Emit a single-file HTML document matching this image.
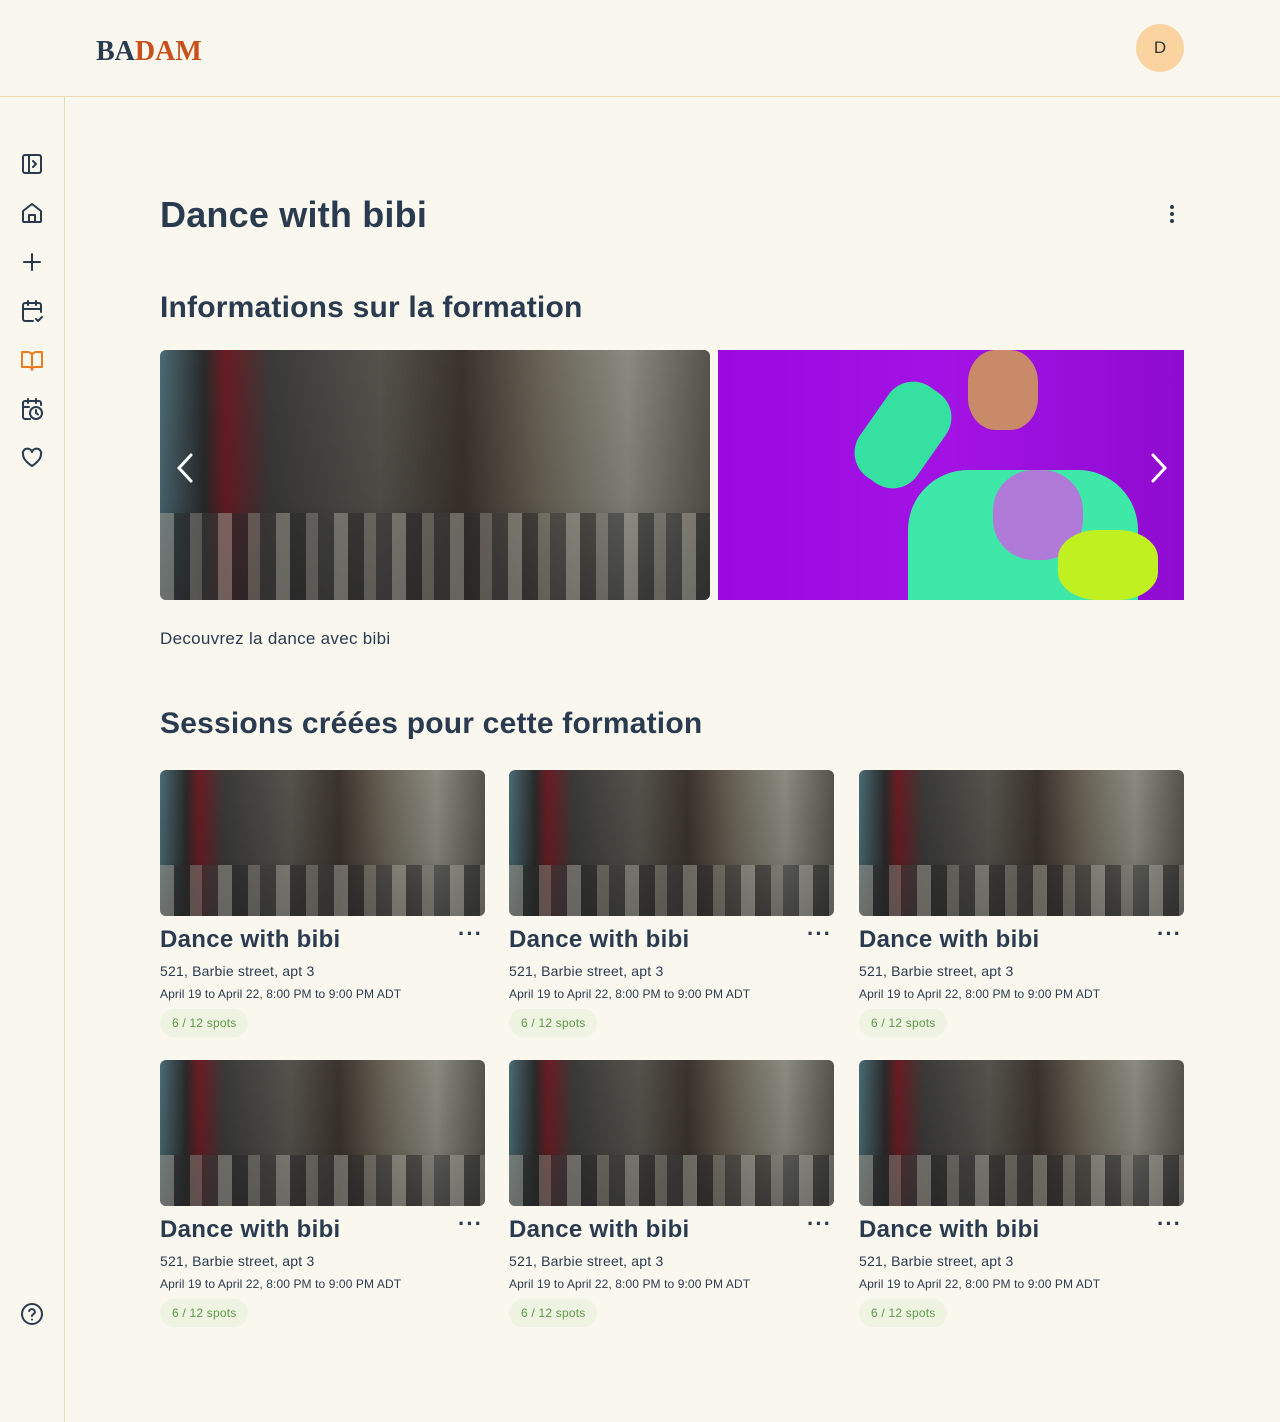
<!DOCTYPE html>
<html><head><meta charset="utf-8"><style>
*{box-sizing:border-box;margin:0;padding:0}
body{width:1280px;height:1422px;background:#faf7ef;font-family:"Liberation Sans",sans-serif;color:#2a3b50;position:relative;overflow:hidden}
.hdr{position:absolute;left:0;top:0;width:1280px;height:97px;border-bottom:1px solid #ecdcb4}
.logo{position:absolute;left:96px;top:36px;font-family:"Liberation Serif",serif;font-size:28px;font-weight:bold}
.logo .b{color:#2a3b50}.logo .o{color:#c9501a}
.av{position:absolute;left:1136px;top:24px;width:48px;height:48px;border-radius:50%;background:#fbd3a0;color:#333;text-align:center;line-height:48px;font-size:17px}
.side{position:absolute;left:64px;top:97px;width:1px;height:1325px;background:#ecdcb4}
.ic{position:absolute;left:20px;width:24px;height:24px}
h1{position:absolute;left:160px;top:194px;font-size:36px;font-weight:bold;color:#2a3b50;letter-spacing:.2px}
h2{position:absolute;left:160px;font-size:30px;font-weight:bold;color:#2a3b50;letter-spacing:.2px}
.photo{background:linear-gradient(180deg,rgba(0,0,0,0) 0%,rgba(0,0,0,.1) 60%,rgba(20,20,20,.5) 100%),linear-gradient(90deg,#4b6b74 0%,#2a2a2a 8%,#6a1c24 12%,#3a3a38 20%,#55524c 40%,#3b332d 55%,#6b6558 70%,#8a8a80 85%,#55544c 100%);position:absolute;overflow:hidden}
.photo::after{content:"";position:absolute;left:0;right:0;bottom:0;height:35%;background:repeating-linear-gradient(90deg,#9a9890 0 14px,#2a2a2a 14px 30px,#807d75 30px 42px,#3a3a3a 42px 58px);opacity:.55}
.card{position:absolute;width:325px}
.card .photo{position:relative;width:325px;height:146px;border-radius:6px}
.card .t{font-size:24px;font-weight:bold;margin-top:10px;height:30px;letter-spacing:.3px}
.card .dots{position:absolute;right:2px;top:151px;font-size:22px;font-weight:bold;letter-spacing:1px}
.card .a{font-size:14px;margin-top:7px;letter-spacing:.2px}
.card .d{font-size:12px;margin-top:8px;letter-spacing:.1px}
.card .s{display:inline-block;background:#eef3e2;color:#5e9a48;font-size:12px;padding:7px 12px;border-radius:14px;margin-top:8px;letter-spacing:.2px}
</style></head><body>
<div class="hdr"><div class="logo"><span class="b">BA</span><span class="o">DAM</span></div><div class="av">D</div></div>
<div class="side"></div>
<svg class="ic" style="top:152px" viewBox="0 0 24 24" fill="none" stroke="#2a3b50" stroke-width="2" stroke-linecap="round" stroke-linejoin="round"><rect x="3" y="3" width="18" height="18" rx="2"/><path d="M9 3v18M13 9l3 3-3 3"/></svg>
<svg class="ic" style="top:201px" viewBox="0 0 24 24" fill="none" stroke="#2a3b50" stroke-width="2" stroke-linecap="round" stroke-linejoin="round"><path d="M3 10l9-7 9 7v10a1 1 0 0 1-1 1H4a1 1 0 0 1-1-1z"/><path d="M9 21v-7h6v7"/></svg>
<svg class="ic" style="top:250px" viewBox="0 0 24 24" fill="none" stroke="#2a3b50" stroke-width="2" stroke-linecap="round"><path d="M12 4v16M4 12h16"/></svg>
<svg class="ic" style="top:299px" viewBox="0 0 24 24" fill="none" stroke="#2a3b50" stroke-width="2" stroke-linecap="round" stroke-linejoin="round"><path d="M21 13V6a2 2 0 0 0-2-2H5a2 2 0 0 0-2 2v14a2 2 0 0 0 2 2h8M16 2v4M8 2v4M3 10h18M16 20l2 2 4-4"/></svg>
<svg class="ic" style="top:348px" viewBox="0 0 24 24" fill="none" stroke="#f07a1a" stroke-width="2" stroke-linecap="round" stroke-linejoin="round"><path d="M2 4h6a4 4 0 0 1 4 4v14a3 3 0 0 0-3-3H2zM22 4h-6a4 4 0 0 0-4 4v14a3 3 0 0 1 3-3h7z"/></svg>
<svg class="ic" style="top:397px" viewBox="0 0 24 24" fill="none" stroke="#2a3b50" stroke-width="2" stroke-linecap="round" stroke-linejoin="round"><path d="M21 8V6a2 2 0 0 0-2-2H5a2 2 0 0 0-2 2v14a2 2 0 0 0 2 2h5M16 2v4M8 2v4M3 10h6"/><circle cx="16" cy="16" r="6"/><path d="M16 13v3l2 1.5"/></svg>
<svg class="ic" style="top:446px" viewBox="0 0 24 24" fill="none" stroke="#2a3b50" stroke-width="2" stroke-linejoin="round"><path d="M12 20s-9-5.5-9-11.5A4.5 4.5 0 0 1 12 6a4.5 4.5 0 0 1 9 2.5C21 14.5 12 20 12 20z"/></svg>
<svg class="ic" style="top:1302px" viewBox="0 0 24 24" fill="none" stroke="#2a3b50" stroke-width="2" stroke-linecap="round"><circle cx="12" cy="12" r="10"/><path d="M9.1 9a3 3 0 0 1 5.8 1c0 2-3 2.5-3 4"/><path d="M12 17.5h.01"/></svg>

<h1>Dance with bibi</h1>
<svg style="position:absolute;left:1164px;top:204px" width="16" height="20" viewBox="0 0 16 20" fill="#2a3b50"><circle cx="8" cy="3" r="2"/><circle cx="8" cy="10" r="2"/><circle cx="8" cy="17" r="2"/></svg>
<h2 style="top:291px">Informations sur la formation</h2>
<div class="photo" style="left:160px;top:350px;width:550px;height:250px;border-radius:6px"></div>
<div style="position:absolute;left:718px;top:350px;width:466px;height:250px;background:linear-gradient(90deg,#9a0ae0,#a313e4 50%,#8f0bd0);overflow:hidden">
<div style="position:absolute;left:190px;top:120px;width:230px;height:170px;background:#3de8a8;border-radius:60px 60px 0 0"></div>
<div style="position:absolute;left:150px;top:30px;width:70px;height:110px;background:#35e0a0;transform:rotate(35deg);border-radius:30px"></div>
<div style="position:absolute;left:250px;top:0px;width:70px;height:80px;background:#c98a6a;border-radius:40%"></div>
<div style="position:absolute;left:275px;top:120px;width:90px;height:90px;background:#b07ad8;border-radius:45%"></div>
<div style="position:absolute;left:340px;top:180px;width:100px;height:70px;background:#c0f020;border-radius:40%"></div>
</div>
<svg style="position:absolute;left:174px;top:452px" width="22" height="32" viewBox="0 0 22 32" fill="none" stroke="#fff" stroke-width="3" stroke-linecap="round"><path d="M17 3L5 16l12 13"/></svg>
<svg style="position:absolute;left:1148px;top:452px" width="22" height="32" viewBox="0 0 22 32" fill="none" stroke="#fff" stroke-width="3" stroke-linecap="round"><path d="M5 3l12 13L5 29"/></svg>
<div style="position:absolute;left:160px;top:629px;font-size:17px;letter-spacing:.3px">Decouvrez la dance avec bibi</div>
<h2 style="top:707px">Sessions créées pour cette formation</h2>

<div class="card" style="left:160px;top:770px"><div class="photo"></div><div class="t">Dance with bibi</div><div class="dots">···</div><div class="a">521, Barbie street, apt 3</div><div class="d">April 19 to April 22, 8:00 PM to 9:00 PM ADT</div><div class="s">6 / 12 spots</div></div>
<div class="card" style="left:509px;top:770px"><div class="photo"></div><div class="t">Dance with bibi</div><div class="dots">···</div><div class="a">521, Barbie street, apt 3</div><div class="d">April 19 to April 22, 8:00 PM to 9:00 PM ADT</div><div class="s">6 / 12 spots</div></div>
<div class="card" style="left:859px;top:770px"><div class="photo"></div><div class="t">Dance with bibi</div><div class="dots">···</div><div class="a">521, Barbie street, apt 3</div><div class="d">April 19 to April 22, 8:00 PM to 9:00 PM ADT</div><div class="s">6 / 12 spots</div></div>
<div class="card" style="left:160px;top:1060px"><div class="photo"></div><div class="t">Dance with bibi</div><div class="dots">···</div><div class="a">521, Barbie street, apt 3</div><div class="d">April 19 to April 22, 8:00 PM to 9:00 PM ADT</div><div class="s">6 / 12 spots</div></div>
<div class="card" style="left:509px;top:1060px"><div class="photo"></div><div class="t">Dance with bibi</div><div class="dots">···</div><div class="a">521, Barbie street, apt 3</div><div class="d">April 19 to April 22, 8:00 PM to 9:00 PM ADT</div><div class="s">6 / 12 spots</div></div>
<div class="card" style="left:859px;top:1060px"><div class="photo"></div><div class="t">Dance with bibi</div><div class="dots">···</div><div class="a">521, Barbie street, apt 3</div><div class="d">April 19 to April 22, 8:00 PM to 9:00 PM ADT</div><div class="s">6 / 12 spots</div></div>
</body></html>
